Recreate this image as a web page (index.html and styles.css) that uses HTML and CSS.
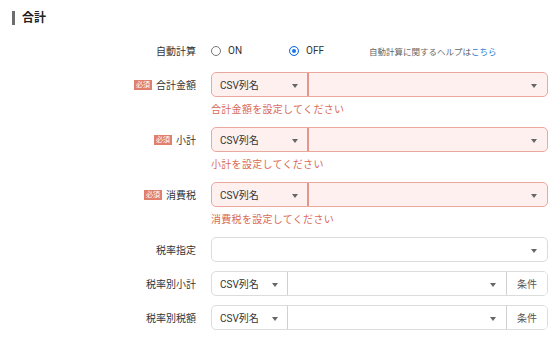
FILE: index.html
```html
<!DOCTYPE html>
<html lang="ja">
<head>
    <meta charset="UTF-8">
    <title>合計</title>
    <link rel="stylesheet" href="styles.css">
</head>
<body>
    <h2 class="section-title">合計</h2>

    <div class="form">
        <div class="form-row radio-row">
            <label class="row-label">自動計算</label>
            <div class="field radios">
                <span class="option"><span class="radio"></span>ON</span>
                <span class="option"><span class="radio checked"></span>OFF</span>
                <span class="help">自動計算に関するヘルプは<a href="#">こちら</a></span>
            </div>
        </div>

        <div class="form-row has-error">
            <label class="row-label"><span class="badge">必須</span>合計金額</label>
            <div class="field">
                <div class="select-group">
                    <div class="select csv wide">CSV列名<i class="arrow"></i></div>
                    <div class="select grow"><i class="arrow"></i></div>
                </div>
                <p class="error">合計金額を設定してください</p>
            </div>
        </div>

        <div class="form-row has-error">
            <label class="row-label"><span class="badge">必須</span>小計</label>
            <div class="field">
                <div class="select-group">
                    <div class="select csv wide">CSV列名<i class="arrow"></i></div>
                    <div class="select grow"><i class="arrow"></i></div>
                </div>
                <p class="error">小計を設定してください</p>
            </div>
        </div>

        <div class="form-row has-error">
            <label class="row-label"><span class="badge">必須</span>消費税</label>
            <div class="field">
                <div class="select-group">
                    <div class="select csv wide">CSV列名<i class="arrow"></i></div>
                    <div class="select grow"><i class="arrow"></i></div>
                </div>
                <p class="error">消費税を設定してください</p>
            </div>
        </div>

        <div class="form-row">
            <label class="row-label">税率指定</label>
            <div class="field">
                <div class="select-group">
                    <div class="select grow"><i class="arrow"></i></div>
                </div>
            </div>
        </div>

        <div class="form-row">
            <label class="row-label">税率別小計</label>
            <div class="field">
                <div class="select-group">
                    <div class="select csv">CSV列名<i class="arrow"></i></div>
                    <div class="select grow"><i class="arrow"></i></div>
                    <button class="cond-btn">条件</button>
                </div>
            </div>
        </div>

        <div class="form-row">
            <label class="row-label">税率別税額</label>
            <div class="field">
                <div class="select-group">
                    <div class="select csv">CSV列名<i class="arrow"></i></div>
                    <div class="select grow"><i class="arrow"></i></div>
                    <button class="cond-btn">条件</button>
                </div>
            </div>
        </div>
    </div>
</body>
</html>
```

FILE: styles.css
```css
* {
    margin: 0;
    padding: 0;
    box-sizing: border-box;
}

body {
    background-color: #fff;
    font-family: Roboto, "Noto Sans CJK JP", sans-serif;
    font-size: 10px;
    color: #333;
}

.section-title {
    margin: 11px 0 0 12px;
    padding-left: 7px;
    border-left: 3px solid #6d6d6d;
    font-size: 12px;
    font-weight: bold;
    line-height: 14px;
    color: #222;
}

.form {
    padding: 13px 12px 0 12px;
}

.form-row {
    display: grid;
    grid-template-columns: 184px 1fr;
    column-gap: 15px;
    margin-bottom: 9px;
}

.form-row.has-error {
    margin-bottom: 10px;
}

.row-label {
    display: flex;
    align-items: center;
    justify-content: flex-end;
    height: 25px;
    font-size: 10px;
    color: #333;
}

.radio-row {
    margin-bottom: 9px;
}

.radios {
    display: flex;
    align-items: center;
    height: 25px;
}

.option {
    display: flex;
    align-items: center;
    width: 78px;
    font-size: 10px;
}

.radio {
    width: 10px;
    height: 10px;
    border: 1px solid #777;
    border-radius: 50%;
    margin-right: 7px;
}

.radio.checked {
    border: 1.5px solid #1a73e8;
    background-color: #1a73e8;
    box-shadow: inset 0 0 0 2px #fff;
}

.help {
    margin-left: 2px;
    font-size: 8.5px;
    color: #666;
}

.help a {
    color: #2b7bd0;
    text-decoration: none;
}

.select-group {
    display: flex;
    height: 25px;
    border: 1px solid #dcdcdc;
    border-radius: 5px;
    background-color: #fff;
    overflow: hidden;
}

.select {
    position: relative;
    display: flex;
    align-items: center;
    padding-left: 8px;
    font-size: 10px;
    color: #333;
}

.select.csv {
    width: 76px;
    border-right: 1px solid #d0d0d0;
}

.select.csv.wide {
    width: 97px;
}

.select.grow {
    flex: 1;
}

.arrow {
    position: absolute;
    right: 10px;
    top: 11px;
    width: 0;
    height: 0;
    border-left: 3.5px solid transparent;
    border-right: 3.5px solid transparent;
    border-top: 4px solid #666;
}

.select.csv .arrow {
    right: 9px;
}

.cond-btn {
    width: 41px;
    border: none;
    border-left: 1px solid #d0d0d0;
    background-color: #fff;
    font-family: inherit;
    font-size: 10px;
    color: #555;
}

.has-error .select-group {
    border-color: #eba99d;
    background-color: #fdf0ef;
}

.has-error .select.csv {
    border-right: 2px solid #e5958a;
}

.badge {
    display: inline-block;
    margin-right: 4px;
    padding: 0 2px;
    height: 10px;
    line-height: 10px;
    font-size: 7px;
    color: #fff;
    background-color: #e0806c;
}

.error {
    margin-top: 6px;
    line-height: 14px;
    font-size: 10px;
    letter-spacing: 0.3px;
    color: #d96a58;
}
```
